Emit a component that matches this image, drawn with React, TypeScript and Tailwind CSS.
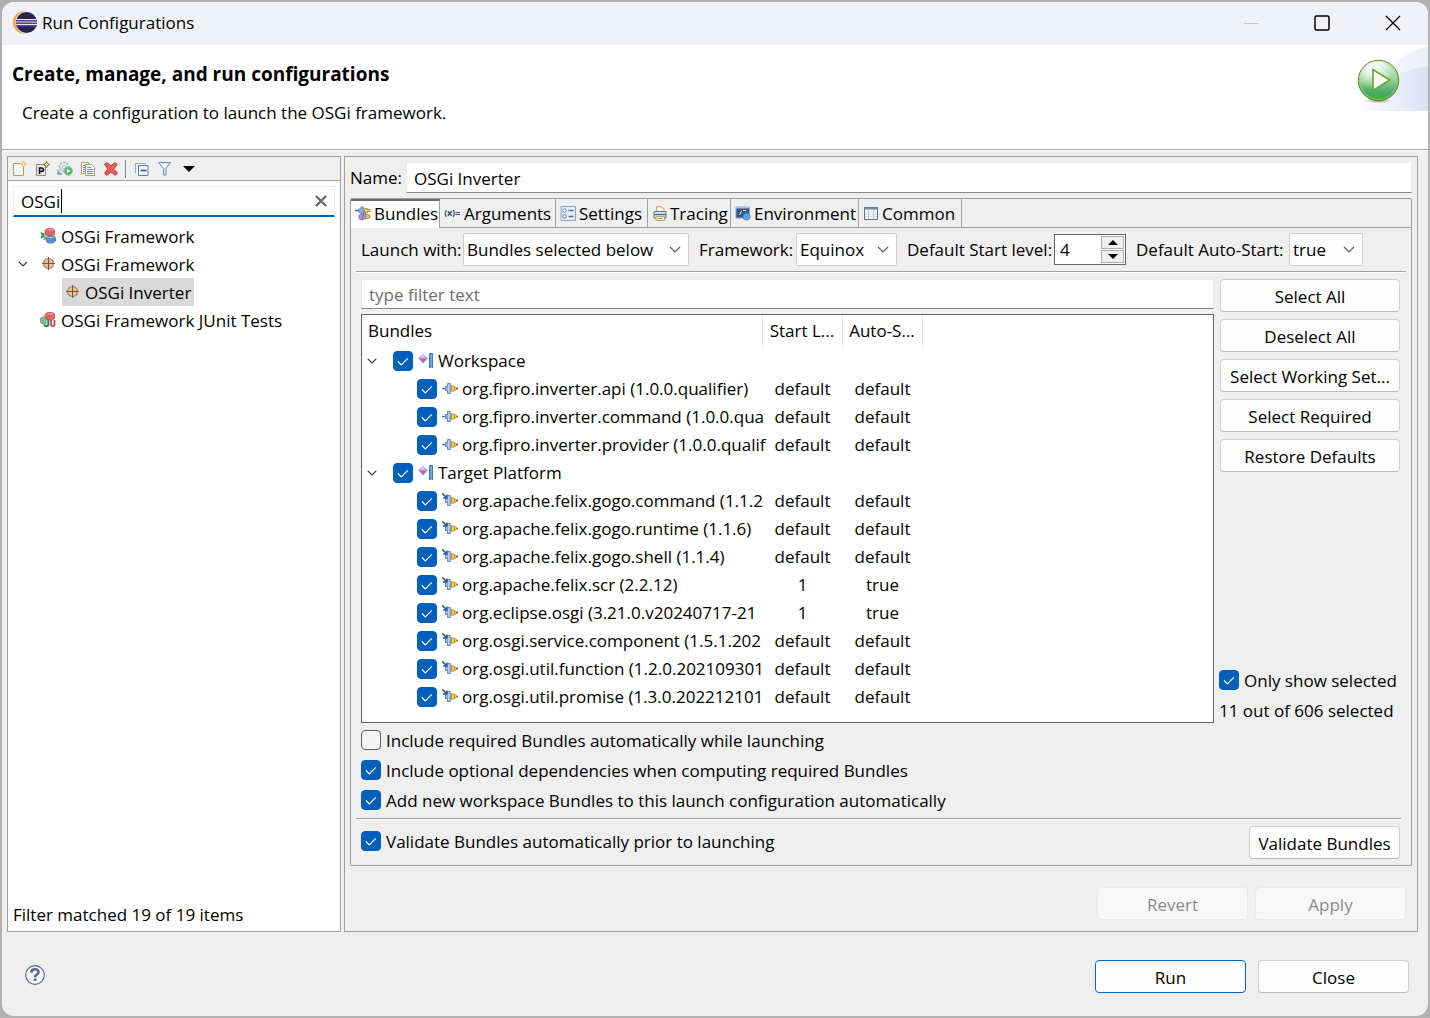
import { ReactNode, useState } from "react";

interface IBundle {
    name: string;
    startLevel: string;
    autoStart: string;
}

interface IBundleGroup {
    name: string;
    external: boolean;
    bundles: IBundle[];
}

const bundleGroups: IBundleGroup[] = [
    {
        name: "Workspace",
        external: false,
        bundles: [
            { name: "org.fipro.inverter.api (1.0.0.qualifier)", startLevel: "default", autoStart: "default" },
            { name: "org.fipro.inverter.command (1.0.0.qua", startLevel: "default", autoStart: "default" },
            { name: "org.fipro.inverter.provider (1.0.0.qualif", startLevel: "default", autoStart: "default" },
        ],
    },
    {
        name: "Target Platform",
        external: true,
        bundles: [
            { name: "org.apache.felix.gogo.command (1.1.2", startLevel: "default", autoStart: "default" },
            { name: "org.apache.felix.gogo.runtime (1.1.6)", startLevel: "default", autoStart: "default" },
            { name: "org.apache.felix.gogo.shell (1.1.4)", startLevel: "default", autoStart: "default" },
            { name: "org.apache.felix.scr (2.2.12)", startLevel: "1", autoStart: "true" },
            { name: "org.eclipse.osgi (3.21.0.v20240717-21", startLevel: "1", autoStart: "true" },
            { name: "org.osgi.service.component (1.5.1.202", startLevel: "default", autoStart: "default" },
            { name: "org.osgi.util.function (1.2.0.202109301", startLevel: "default", autoStart: "default" },
            { name: "org.osgi.util.promise (1.3.0.202212101", startLevel: "default", autoStart: "default" },
        ],
    },
];

/* ---------- icons ---------- */

function Icon({ children, size = 16 }: { children: ReactNode; size?: number }) {
    return (
        <svg width={size} height={size} viewBox="0 0 16 16" fill="none" className="shrink-0" aria-hidden="true">
            {children}
        </svg>
    );
}

function EclipseLogo() {
    return (
        <svg width="24" height="24" viewBox="0 0 24 24" className="shrink-0" aria-hidden="true">
            <circle cx="11.2" cy="11.500" r="11.2" fill="#f7a13c" />
            <circle cx="13.6" cy="11.500" r="11.2" fill="#f1f2f7" />
            <circle cx="13.500" cy="11.500" r="10.500" fill="#2c2255" />
            <path d="M3.2 9.700h20.600M3 12.300h21M3.400 14.700h20.200" stroke="#51478c" strokeWidth="1.800" />
            <path d="M3.600 8.500h19.800M3 11h21M3.100 13.500h20.800" stroke="#e9e7f4" strokeWidth="1" />
        </svg>
    );
}

function RunBanner() {
    return (
        <svg width="74" height="66" viewBox="0 0 74 66" className="shrink-0" aria-hidden="true">
            <defs>
                <linearGradient id="sky" x1="0" y1="0" x2="1" y2="0">
                    <stop offset="0" stopColor="#ffffff" />
                    <stop offset="1" stopColor="#d9e2f6" />
                </linearGradient>
                <linearGradient id="haze" x1="0" y1="0" x2="1" y2="0">
                    <stop offset="0" stopColor="#ffffff" />
                    <stop offset="1" stopColor="#e8eefa" />
                </linearGradient>
                <linearGradient id="ball" x1="0" y1="0" x2="0" y2="1">
                    <stop offset="0" stopColor="#eaf6e4" />
                    <stop offset="0.45" stopColor="#9fd09a" />
                    <stop offset="0.8" stopColor="#4da868" />
                    <stop offset="1" stopColor="#3fb020" />
                </linearGradient>
                <radialGradient id="glow" cx="0.35" cy="0.2" r="0.5">
                    <stop offset="0" stopColor="#ffffff" />
                    <stop offset="1" stopColor="#ffffff" stopOpacity="0" />
                </radialGradient>
                <radialGradient id="shade">
                    <stop offset="0" stopColor="#8d8d8d" />
                    <stop offset="1" stopColor="#ffffff" stopOpacity="0" />
                </radialGradient>
            </defs>
            <path d="M0 66C20 50 30 12 74 1v65z" fill="url(#haze)" />
            <path d="M2 66C14 50 34 26 74 21v45z" fill="url(#sky)" />
            <ellipse cx="25" cy="56" rx="20" ry="3" fill="url(#shade)" />
            <circle cx="24.500" cy="35.500" r="20.200" fill="url(#ball)" stroke="#6b7d35" strokeWidth="1" />
            <circle cx="24.500" cy="35.500" r="18.800" fill="none" stroke="#7fdc5a" strokeOpacity="0.5" strokeWidth="1.600" />
            <circle cx="24.500" cy="35.500" r="19.600" fill="url(#glow)" />
            <path d="M19 24.500v21L35.500 35z" fill="#ffffff" stroke="#5fae2e" strokeWidth="1.600" />
        </svg>
    );
}

function NewIcon() {
    return (
        <Icon>
            <path d="M2.500 2.500h7l3 3v9h-10z" fill="#f4f9fd" stroke="#b39b5e" />
            <path d="M12.500 0v6M9.500 3h6" stroke="#e0b94a" strokeWidth="2" />
            <path d="M12.500 1v4M10.500 3h4" stroke="#fff3c2" />
        </Icon>
    );
}

function NewPrototypeIcon() {
    return (
        <Icon>
            <path d="M2.500 3.500h7l2 2v9h-9z" fill="#dfeaf5" stroke="#8e8a6d" />
            <path d="M5.500 13V7h2.200a1.700 1.700 0 010 3.400H5.500" stroke="#111111" strokeWidth="1.600" />
            <path d="M12.500 0.500l1 2 2 1-2 1-1 2-1-2-2-1 2-1z" fill="#fff0b0" stroke="#6b5212" strokeWidth="0.900" />
        </Icon>
    );
}

function ExportIcon() {
    return (
        <Icon>
            <circle cx="7" cy="6" r="4.500" fill="#e9eef5" stroke="#aeb9cb" strokeWidth="2" strokeDasharray="2.200 1.100" />
            <circle cx="7" cy="6" r="1.600" fill="#ffffff" stroke="#aeb9cb" />
            <path d="M1 9v4h4M1 13l2-2" stroke="#7b96c4" strokeWidth="1.300" />
            <circle cx="11.300" cy="10" r="4.200" fill="#55b36e" stroke="#8cc99b" />
            <path d="M10 7.800v4.400l3.500-2.200z" fill="#ffffff" />
        </Icon>
    );
}

function DuplicateIcon() {
    return (
        <Icon>
            <path d="M1.500 1.500h7v11h-7z" fill="#f3f8fd" stroke="#b6a05f" />
            <path d="M3 4.500h2M3 6.500h2M3 8.500h2M3 10.500h2" stroke="#6d8fc4" />
            <path d="M5.500 3.500h6l3 3v8h-9z" fill="#f3f8fd" stroke="#b6a05f" />
            <path d="M7 6.500h4M7 8.500h6M7 10.500h6M7 12.500h6" stroke="#6d8fc4" />
        </Icon>
    );
}

function DeleteIcon() {
    return (
        <Icon>
            <path d="M1.500 3.500l2.200-2L8 4.800l4-3.300 2.200 2L10.800 8l3.700 4.200-2.200 2.200L8 11l-4.200 3.400-2.300-2.200L5 8z" fill="#e5605c" stroke="#cc3a3a" strokeLinejoin="round" />
        </Icon>
    );
}

function CollapseIcon() {
    return (
        <Icon>
            <path d="M1.500 12V2.500H12" stroke="#8fa6c9" />
            <path d="M4.500 4.500h9.500v10H4.500z" fill="#f2f8ff" stroke="#5b7db1" />
            <path d="M6.500 9.500h6" stroke="#1f4f94" strokeWidth="1.400" />
        </Icon>
    );
}

function FilterIcon() {
    return (
        <Icon>
            <path d="M1.500 1.500h12l-4.500 6v6.500H6.500V7.500z" fill="#cfe4f6" stroke="#6f90b8" />
            <path d="M3.500 2.800h7.500L7.500 7z" fill="#ffffff" />
        </Icon>
    );
}

// cluster of three blocks shared by the Eclipse style launch types
function BlocksIcon({ junit }: { junit?: boolean }) {
    return (
        <Icon>
            <path d="M5 2.200l2.500-1.700h5L14.500 2v4.500L12.500 8H7L5 6.500z" fill="#e0636a" stroke="#c4424d" strokeWidth="0.700" />
            <path d="M6 2.400l1.800-1.200h4.700l1 1.200z" fill="#f2a0a0" />
            {junit ? (
                <>
                    <path d="M0.500 6L4 4.500l2 2V12l-3 .5-2.500-2z" fill="#7dbd8c" stroke="#5a9c6b" strokeWidth="0.700" />
                    <path d="M8.300 7.500V12q0 2.200-1.800 2.200T4.500 13" stroke="#2f7d57" strokeWidth="2" />
                    <path d="M11 8v4.700q0 1.500 1.700 1.500t1.800-1.500V8" stroke="#c23b4e" strokeWidth="1.700" />
                </>
            ) : (
                <>
                    <path d="M0.500 4l4 1.500v3l-4 2.500 1-3.500z" fill="#2f9e50" />
                    <path d="M3.500 8.500L6 7.500v4L3.500 12z" fill="#6bb57d" />
                    <path d="M6.500 9.500L9 8l5.500.5 1 1.500v3L13 15H8l-1.500-1.500z" fill="#5d8fd0" stroke="#3f6cab" strokeWidth="0.700" />
                    <path d="M7.500 9.800L9.300 8.700h4.700l-1.300 1.300z" fill="#a9c9ee" />
                </>
            )}
        </Icon>
    );
}

function TargetIcon() {
    return (
        <Icon>
            <circle cx="8.500" cy="7.500" r="5" fill="#e3c48c" stroke="#a98470" strokeWidth="1.200" />
            <path d="M8.500 1v13M2 7.500h13" stroke="#7d4f42" />
        </Icon>
    );
}

function BundlesTabIcon() {
    return (
        <Icon>
            <path d="M0 4.500h4" stroke="#39669c" strokeWidth="1.400" />
            <path d="M3.500 3.500L6 2V1h2.500v7H6V7L3.500 6z" fill="#8badde" stroke="#4a73b3" strokeWidth="0.700" />
            <path d="M9.500 2.500h3v1H15v2h-2.500V7h-3z" fill="#f2ca53" stroke="#a87d1c" strokeWidth="0.700" />
            <path d="M4 9.500L6 8h2v6H6l-2-1.500z" fill="#bd86d6" stroke="#8d4fae" strokeWidth="0.700" />
            <path d="M8.500 6h2v7h-2z" fill="#8fb0e2" stroke="#4a73b3" strokeWidth="0.700" />
            <path d="M11 8.500h2.500v1H15v2h-1.500v1H11z" fill="#f2ca53" stroke="#a87d1c" strokeWidth="0.700" />
        </Icon>
    );
}

function ArgumentsIcon() {
    return (
        <Icon>
            <path d="M2.300 4Q0.300 7.500 2.300 11M9.200 4q2 3.500 0 7" stroke="#4c5f80" strokeWidth="1.300" />
            <path d="M3.800 5.200l3.900 4.600M7.700 5.200L3.800 9.800" stroke="#3d5174" strokeWidth="1.500" />
            <path d="M11.500 6.500h4.500M11.500 8.500h4.500" stroke="#3d5174" />
        </Icon>
    );
}

function SettingsIcon() {
    return (
        <Icon>
            <path d="M1 .5h14.500v14H1z" fill="#e4edf7" stroke="#8aa4c8" />
            <circle cx="4.500" cy="4.500" r="1.700" fill="#ffffff" stroke="#6b7f9f" />
            <circle cx="4.500" cy="10.500" r="1.700" fill="#ffffff" stroke="#6b7f9f" />
            <path d="M8.500 4.500h5M8.500 10.500h5" stroke="#54749f" strokeWidth="1.300" />
        </Icon>
    );
}

function TracingIcon() {
    return (
        <Icon>
            <path d="M4.500 6V.8h5L12 3.300V6z" fill="#fdf6dd" stroke="#bfa052" />
            <path d="M2 5.500h12v6.500H2z" fill="#e3edf9" stroke="#57719c" />
            <path d="M2 8.500h12" stroke="#57719c" strokeWidth="1.600" />
            <path d="M4 10.500h8.500v4H4z" fill="#fdf6dd" stroke="#bfa052" />
            <path d="M5.500 12.500h5" stroke="#6d8fc4" />
        </Icon>
    );
}

function EnvironmentIcon() {
    return (
        <Icon>
            <path d="M1 1h13.500v8L10 12H1z" fill="#3a5680" stroke="#8ba6cc" />
            <path d="M1 1.800h13.500" stroke="#a9c4e8" strokeWidth="1.600" />
            <path d="M4.500 9L6.500 5M8 4.500h3" stroke="#e9f0fa" />
            <circle cx="11.500" cy="10.500" r="3.600" fill="#5f9ddb" stroke="#3d76b6" strokeWidth="0.700" />
        </Icon>
    );
}

function CommonIcon() {
    return (
        <Icon>
            <path d="M1.500 1.500h13v12h-13z" fill="#f7fbff" stroke="#5d6f94" />
            <path d="M1 2.500h14" stroke="#7384a6" strokeWidth="2" />
            <path d="M2 6.500h12M2 8.500h12M2 10.500h12" stroke="#dbe5ef" />
            <path d="M5.500 4v9M10.500 4v9" stroke="#b7c5d9" />
        </Icon>
    );
}

function GroupIcon() {
    return (
        <Icon>
            <path d="M5 0.700L9.800 5.500 5 10.300.2 5.500z" fill="#b98bc9" />
            <path d="M5 0.700L8 5.500H2z" fill="#dcbfe6" />
            <path d="M5 10.300L2 5.500h6z" fill="#a36cb8" />
            <path d="M11.500 0.500h3v14.500l-1.500-1.500-1.500 1.500z" fill="#62a8e6" stroke="#2c6fae" strokeWidth="0.900" />
        </Icon>
    );
}

function BundleIcon({ external }: { external: boolean }) {
    return (
        <Icon>
            {external ? (
                <path d="M0.300 0.500l4.200 4M5 1.500v3.500H1" stroke="#1e5b80" strokeWidth="1.600" />
            ) : (
                <path d="M0 7.500h3.500" stroke="#4e6f9c" strokeWidth="1.400" />
            )}
            <path d="M3.500 5.500h2V2.500h2.800v10H5.500v-3h-2z" fill="#8fadde" stroke="#5276b3" strokeWidth="0.800" />
            <path d="M6.800 3.500v8" stroke="#d3e0f5" />
            <path d="M9.500 4.500l3 1v4l-3 1z" fill="#f6d05c" stroke="#b88a1e" strokeWidth="0.900" />
            <path d="M12.500 6h1.700v3h-1.700z" fill="#fbe69a" stroke="#b88a1e" strokeWidth="0.800" />
            <path d="M14.500 7.500H16" stroke="#5b4a1c" strokeWidth="1.400" />
        </Icon>
    );
}

function Chevron({ className = "" }: { className?: string }) {
    return (
        <svg width="12" height="8" viewBox="0 0 12 8" fill="none" stroke="currentColor" strokeWidth="1.200" className={className} aria-hidden="true">
            <path d="M1 1l5 5 5-5" />
        </svg>
    );
}

function TreeChevron() {
    return (
        <svg width="10" height="6" viewBox="0 0 10 6" fill="none" stroke="#333333" strokeWidth="1.200" className="shrink-0" aria-hidden="true">
            <path d="M.8.8L5 5 9.200.8" />
        </svg>
    );
}

/* ---------- controls ---------- */

function CheckBox({ id, label, defaultChecked = true }: { id: string; label?: string; defaultChecked?: boolean }) {
    return (
        <span className="relative block h-5 w-5 shrink-0">
            <input
                id={id}
                type="checkbox"
                aria-label={label}
                defaultChecked={defaultChecked}
                className="peer block h-5 w-5 appearance-none rounded border border-[#626262] bg-[#f5f5f5] checked:border-[#005fb8] checked:bg-[#005fb8]"
            />
            <svg
                viewBox="0 0 20 20"
                fill="none"
                stroke="#ffffff"
                strokeWidth="1.200"
                className="pointer-events-none absolute inset-0 hidden h-5 w-5 peer-checked:block"
                aria-hidden="true"
            >
                <path d="M5 10.500l3.300 3.300L14.800 7.300" />
            </svg>
        </span>
    );
}

function Option({ id, children, defaultChecked = true }: { id: string; children: ReactNode; defaultChecked?: boolean }) {
    return (
        <div className="flex h-[30px] items-center gap-[5px]">
            <CheckBox id={id} defaultChecked={defaultChecked} />
            <label htmlFor={id} className="pt-[2px] whitespace-nowrap">{children}</label>
        </div>
    );
}

function Button({ children, className = "", disabled = false, primary = false }: { children: ReactNode; className?: string; disabled?: boolean; primary?: boolean }) {
    const look = disabled
        ? "border-[#e9e9e9] bg-[#f8f8f8] text-[#8b8b8b]"
        : primary
            ? "border-[#0067c0] bg-[#fdfdfd]"
            : "border-[#d0d0d0] border-b-[#bbbbbb] bg-[#fdfdfd]";
    return (
        <button type="button" disabled={disabled} className={`h-[33px] rounded border pt-[2px] whitespace-nowrap ${look} ${className}`}>
            {children}
        </button>
    );
}

function DropDown({ id, label, value, className, labelClassName }: { id: string; label: string; value: string; className: string; labelClassName: string }) {
    return (
        <div className="flex items-center">
            <label htmlFor={id} className={`pt-px whitespace-nowrap ${labelClassName}`}>{label}</label>
            <div className="relative">
                <select id={id} defaultValue={value} className={`block h-[33px] appearance-none rounded-xs border border-[#d0d0d0] bg-[#fdfdfd] pt-px pl-[3px] ${className}`}>
                    <option>{value}</option>
                </select>
                <Chevron className="pointer-events-none absolute top-[13px] right-2 text-[#5f5f5f]" />
            </div>
        </div>
    );
}

function Separator({ className = "" }: { className?: string }) {
    return <div className={`h-[2px] border-t border-[#a0a0a0] bg-white ${className}`} />;
}

/* ---------- sections ---------- */

function TitleBar() {
    return (
        <div className="flex h-[43px] items-center justify-between bg-[#f1f2f7] pr-[27px] pb-[2px] pl-[11px]">
            <div className="flex items-center gap-[5px]">
                <EclipseLogo />
                <span>Run Configurations</span>
            </div>
            <div className="flex items-center gap-[55px]">
                <button type="button" aria-label="Minimize" disabled>
                    <svg width="16" height="16" viewBox="0 0 16 16" className="block"><path d="M1 8.500h15" stroke="#c3c4c8" /></svg>
                </button>
                <button type="button" aria-label="Maximize">
                    <svg width="16" height="16" viewBox="0 0 16 16" fill="none" className="block"><rect x="1" y="1" width="14" height="14" rx="1.500" stroke="#000000" strokeWidth="1.500" /></svg>
                </button>
                <button type="button" aria-label="Close window">
                    <svg width="16" height="16" viewBox="0 0 16 16" className="block"><path d="M1 1l14 14M15 1L1 15" stroke="#000000" strokeWidth="1.300" /></svg>
                </button>
            </div>
        </div>
    );
}

function Header() {
    return (
        <header className="flex h-[104px] justify-between bg-white">
            <div className="flex flex-col gap-[15px] pt-[17px] pl-[10px]">
                <h1 className="text-[19px] leading-6 font-bold">Create, manage, and run configurations</h1>
                <p className="pl-[10px] leading-6">Create a configuration to launch the OSGi framework.</p>
            </div>
            <RunBanner />
        </header>
    );
}

function LaunchTypes() {
    const [query, setQuery] = useState("OSGi");

    return (
        <aside className="flex w-[334px] shrink-0 flex-col border border-[#a0a0a0] bg-white">
            <div className="flex h-6 items-center border-b border-[#a0a0a0] bg-[#efefef] pl-[3px]">
                <div className="flex gap-[7px]">
                    <button type="button" aria-label="New launch configuration"><NewIcon /></button>
                    <button type="button" aria-label="New prototype"><NewPrototypeIcon /></button>
                    <button type="button" aria-label="Export"><ExportIcon /></button>
                    <button type="button" aria-label="Duplicate"><DuplicateIcon /></button>
                    <button type="button" aria-label="Delete"><DeleteIcon /></button>
                </div>
                <div className="mr-2 ml-[6px] h-[18px] w-px bg-[#8c8c8c]" />
                <div className="flex gap-[7px]">
                    <button type="button" aria-label="Collapse all"><CollapseIcon /></button>
                    <button type="button" aria-label="Filter"><FilterIcon /></button>
                    <button type="button" aria-label="View menu" className="pl-[3px]">
                        <svg width="12" height="6" viewBox="0 0 12 6" className="block"><path d="M0 0h12L6 6z" fill="#000000" /></svg>
                    </button>
                </div>
            </div>

            <div className="relative mx-[5px] mt-[5px]">
                <input
                    type="text"
                    aria-label="Filter configurations"
                    value={query}
                    onChange={(e) => setQuery(e.target.value)}
                    className="block h-[31px] w-full border border-b-2 border-[#ececec] border-b-[#0067c0] bg-white pt-px pr-8 pl-[7px] outline-none"
                />
                <span className="absolute top-[3px] left-[48px] h-[24px] w-px bg-black" />
                <button type="button" aria-label="Clear" className="absolute top-[9px] right-[8px]">
                    <svg width="12" height="12" viewBox="0 0 12 12" className="block"><path d="M1 1l10 10M11 1L1 11" stroke="#6a6a6a" strokeWidth="2.400" /></svg>
                </button>
            </div>

            <ul className="mt-[5px] flex-1">
                <li className="flex h-7 items-center gap-[5px] pl-8">
                    <BlocksIcon />
                    <span className="pt-px">OSGi Framework</span>
                </li>
                <li>
                    <div className="flex h-7 items-center gap-[5px] pl-[10px]">
                        <TreeChevron />
                        <span className="pl-[7px]"><TargetIcon /></span>
                        <span className="pt-px">OSGi Framework</span>
                    </div>
                    <ul className="pl-[54px]">
                        <li className="flex h-7 w-fit items-center gap-[5px] rounded-xs bg-[#d9d9d9] pr-[3px] pl-[2px]">
                            <TargetIcon />
                            <span className="pt-px">OSGi Inverter</span>
                        </li>
                    </ul>
                </li>
                <li className="flex h-7 items-center gap-[5px] pl-8">
                    <BlocksIcon junit />
                    <span className="pt-px">OSGi Framework JUnit Tests</span>
                </li>
            </ul>

            <p className="px-[5px] pb-1 leading-6">Filter matched 19 of 19 items</p>
        </aside>
    );
}

function Tabs() {
    return (
        <div role="tablist" className="flex h-[29px] border-b border-[#a0a0a0]">
            <button type="button" role="tab" aria-selected="true" className="-mb-px flex w-[89px] items-center gap-[3px] border-t-2 border-r border-t-[#6b6b6b] border-r-[#a0a0a0] bg-white pb-px pl-1">
                <BundlesTabIcon />Bundles
            </button>
            <button type="button" role="tab" className="flex w-[116px] items-center gap-1 border-r border-[#a0a0a0] pt-px pl-1">
                <ArgumentsIcon />Arguments
            </button>
            <button type="button" role="tab" className="flex w-[92px] items-center gap-[3px] border-r border-[#a0a0a0] pt-px pl-1">
                <SettingsIcon />Settings
            </button>
            <button type="button" role="tab" className="flex w-[83px] items-center gap-[2px] border-r border-[#a0a0a0] pt-px pl-1">
                <TracingIcon />Tracing
            </button>
            <button type="button" role="tab" className="flex w-[128px] items-center gap-[3px] border-r border-[#a0a0a0] pt-px pl-1">
                <EnvironmentIcon />Environment
            </button>
            <button type="button" role="tab" className="flex w-[103px] items-center gap-[3px] border-r border-[#a0a0a0] pt-px pl-1">
                <CommonIcon />Common
            </button>
        </div>
    );
}

function LaunchOptions() {
    return (
        <div className="flex items-center gap-[10px] px-[10px] py-[5px]">
            <DropDown id="launch-with" label="Launch with:" value="Bundles selected below" className="w-[226px]" labelClassName="w-[102px]" />
            <DropDown id="framework" label="Framework:" value="Equinox" className="w-[101px]" labelClassName="w-[97px]" />
            <div className="flex items-center">
                <label htmlFor="start-level" className="w-[147px] pt-px whitespace-nowrap">Default Start level:</label>
                <div className="flex h-[31px] w-[72px] border border-[#646464] bg-white p-px">
                    <input id="start-level" type="text" defaultValue="4" className="w-0 flex-1 bg-white pt-px pl-1 outline-none" />
                    <div className="flex w-[23px] flex-col gap-px">
                        <button type="button" aria-label="Increase" className="flex flex-1 items-center justify-center border border-[#adadad] bg-[#efefef]">
                            <svg width="10" height="5" viewBox="0 0 10 5"><path d="M0 5h10L5 0z" fill="#000000" /></svg>
                        </button>
                        <button type="button" aria-label="Decrease" className="flex flex-1 items-center justify-center border border-[#adadad] bg-[#efefef]">
                            <svg width="10" height="5" viewBox="0 0 10 5"><path d="M0 0h10L5 5z" fill="#000000" /></svg>
                        </button>
                    </div>
                </div>
            </div>
            <DropDown id="auto-start" label="Default Auto-Start:" value="true" className="w-[74px]" labelClassName="w-[153px]" />
        </div>
    );
}

function BundleTable() {
    return (
        <div className="flex-1 border border-[#646464] bg-white">
            <table className="w-full table-fixed border-collapse">
                <colgroup>
                    <col className="w-[400px]" />
                    <col className="w-[80px]" />
                    <col className="w-[80px]" />
                    <col />
                </colgroup>
                <thead>
                    <tr className="h-8 text-left">
                        <th className="border-r border-[#e5e5e5] pl-[6px] font-normal">Bundles</th>
                        <th className="border-r border-[#e5e5e5] text-center font-normal whitespace-nowrap">Start L...</th>
                        <th className="border-r border-[#e5e5e5] text-center font-normal whitespace-nowrap">Auto-S...</th>
                        <th></th>
                    </tr>
                </thead>
                {bundleGroups.map((group) => (
                    <tbody key={group.name}>
                        <tr className="h-7">
                            <td>
                                <div className="flex items-center pl-[5px]">
                                    <TreeChevron />
                                    <div className="flex items-center gap-[5px] pl-4">
                                        <CheckBox id={group.name} label={group.name} />
                                        <div className="flex items-center gap-1">
                                            <GroupIcon />
                                            <span>{group.name}</span>
                                        </div>
                                    </div>
                                </div>
                            </td>
                            <td></td>
                            <td></td>
                            <td></td>
                        </tr>
                        {group.bundles.map((bundle) => (
                            <tr key={bundle.name} className="h-7">
                                <td>
                                    <div className="flex items-center gap-[5px] pl-[55px]">
                                        <CheckBox id={bundle.name} label={bundle.name} />
                                        <div className="flex items-center gap-1 whitespace-nowrap">
                                            <BundleIcon external={group.external} />
                                            <span>{bundle.name}</span>
                                        </div>
                                    </div>
                                </td>
                                <td className="pl-px text-center">{bundle.startLevel}</td>
                                <td className="pl-px text-center">{bundle.autoStart}</td>
                                <td></td>
                            </tr>
                        ))}
                    </tbody>
                ))}
            </table>
        </div>
    );
}

function BundlesTab() {
    return (
        <div className="flex flex-1 flex-col">
            <LaunchOptions />
            <Separator className="mx-[5px]" />

            <div className="flex flex-1 gap-[6px] pt-[6px] pr-[11px] pl-[10px]">
                <div className="flex min-w-0 flex-1 flex-col gap-[5px]">
                    <input
                        type="text"
                        aria-label="Filter bundles"
                        placeholder="type filter text"
                        className="block h-[30px] w-full border border-[#e8e8e8] border-b-[#868686] bg-white pl-[7px] outline-none placeholder:text-[#6d6d6d]"
                    />
                    <BundleTable />
                </div>
                <div className="flex w-[180px] flex-col gap-[7px]">
                    <Button>Select All</Button>
                    <Button>Deselect All</Button>
                    <Button>Select Working Set...</Button>
                    <Button>Select Required</Button>
                    <Button>Restore Defaults</Button>
                    <div className="mt-auto -ml-px">
                        <Option id="only-selected">Only show selected</Option>
                        <p className="h-7 leading-8 whitespace-nowrap">11 out of 606 selected</p>
                    </div>
                </div>
            </div>

            <div className="pt-[2px] pb-[3px] pl-[10px]">
                <Option id="include-required" defaultChecked={false}>Include required Bundles automatically while launching</Option>
                <Option id="include-optional">Include optional dependencies when computing required Bundles</Option>
                <Option id="add-workspace">Add new workspace Bundles to this launch configuration automatically</Option>
            </div>

            <Separator className="mr-[10px] ml-[5px]" />
            <div className="flex items-start justify-between py-[6px] pr-[11px] pl-[10px]">
                <Option id="validate">Validate Bundles automatically prior to launching</Option>
                <Button className="w-[151px]">Validate Bundles</Button>
            </div>
        </div>
    );
}

function ConfigurationEditor() {
    return (
        <main className="flex min-w-0 flex-1 flex-col border border-[#a0a0a0] px-[5px] pt-[5px] pb-[11px]">
            <div className="flex items-center gap-1">
                <label htmlFor="config-name" className="w-[52px] pt-px">Name:</label>
                <input
                    id="config-name"
                    type="text"
                    defaultValue="OSGi Inverter"
                    className="block h-[31px] min-w-0 flex-1 border border-[#ececec] border-b-[#868686] bg-white pt-px pl-[7px] outline-none"
                />
            </div>

            <div className="mt-[5px] flex flex-1 flex-col rounded-t-xs border border-[#a0a0a0]">
                <Tabs />
                <BundlesTab />
            </div>

            <div className="mt-[21px] flex justify-end gap-[7px] pr-[6px]">
                <Button disabled className="w-[151px]">Revert</Button>
                <Button disabled className="w-[151px]">Apply</Button>
            </div>
        </main>
    );
}

function Footer() {
    return (
        <footer className="flex items-start justify-between pt-7 pr-[19px] pb-[23px] pl-[23px]">
            <button type="button" aria-label="Help" className="mt-[5px]">
                <svg width="20" height="20" viewBox="0 0 20 20" fill="none" className="block">
                    <circle cx="10" cy="10" r="9.300" fill="#f6f7f9" stroke="#5a6b8a" strokeWidth="1.200" />
                    <path d="M6.300 7.800c0-4.800 7.400-4.600 7.200-.6-.1 2.300-3.400 2.400-3.400 5" stroke="#56688a" strokeWidth="2.600" />
                    <path d="M8.800 13.600h2.600v2.400H8.800z" fill="#56688a" />
                </svg>
            </button>
            <div className="flex gap-3">
                <Button primary className="w-[151px]">Run</Button>
                <Button className="w-[151px]">Close</Button>
            </div>
        </footer>
    );
}

export default function App() {
    return (
        <div className="flex min-h-screen flex-col bg-[#b0b0b0] p-[2px] font-['Open_Sans','Noto_Sans',sans-serif] text-[17px] leading-6 text-black">
            <div className="flex flex-1 flex-col overflow-hidden rounded-xl bg-[#efefef]">
                <TitleBar />
                <Header />
                <Separator />
                <div className="flex flex-1 gap-[3px] pt-[5px] pr-[10px] pl-[5px]">
                    <LaunchTypes />
                    <ConfigurationEditor />
                </div>
                <Footer />
            </div>
        </div>
    );
}
